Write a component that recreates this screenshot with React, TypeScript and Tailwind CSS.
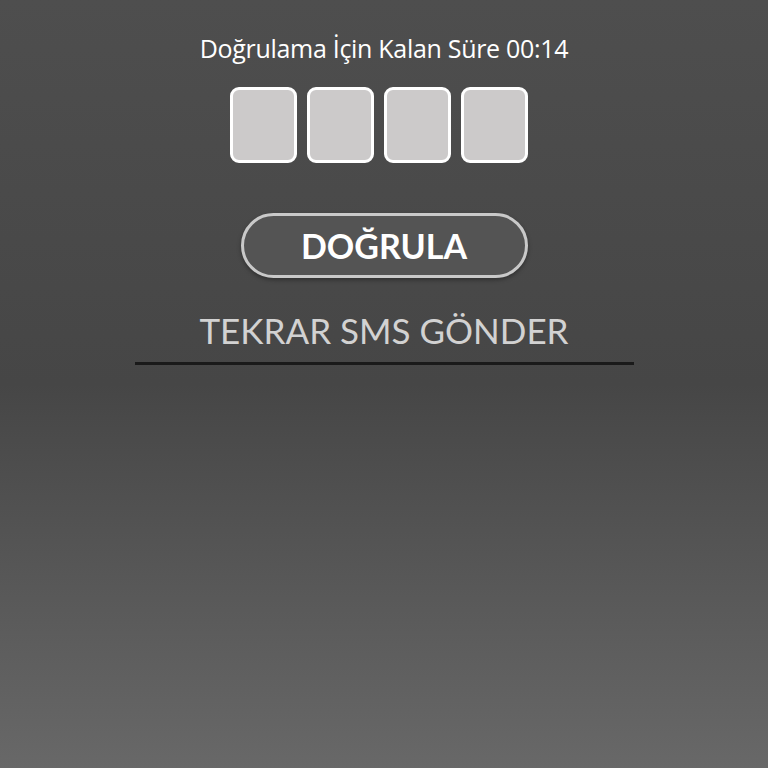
export default function App() {
  const digits = ['', '', '', ''];

  return (
    <div className="h-[768px] w-[768px] overflow-hidden bg-[linear-gradient(to_bottom,#4e4e4e_0%,#464646_50%,#686868_100%)]">
      <div className="flex flex-col items-center">
        {/* countdown */}
        <p className="mt-[30px] text-[25px] leading-[36px] tracking-[-0.3px] text-white font-['Open_Sans',sans-serif]">
          Doğrulama İçin Kalan Süre 00:14
        </p>

        {/* code inputs */}
        <div className="mt-[21px] mr-[10px] flex gap-[10px]">
          {digits.map((d, i) => (
            <div
              key={i}
              className="h-[76px] w-[67px] rounded-[9px] border-[3px] border-white bg-[#cccaca]"
            >
              {d}
            </div>
          ))}
        </div>

        {/* verify button */}
        <button className="mt-[50px] flex h-[65px] w-[287px] items-center justify-center rounded-full border-[3px] border-[#c9c9c9] bg-[#545454] shadow-[0_2px_4px_rgba(0,0,0,0.35)]">
          <span className="text-[34px] font-bold text-white font-['Lato',sans-serif]">
            DOĞRULA
          </span>
        </button>

        {/* resend */}
        <div className="mt-[33px] flex w-[499px] flex-col items-center border-b-[3px] border-[#1a1a1a] pb-[13px]">
          <span className="text-[35px] leading-[38px] text-[#d2d2d2] font-['Lato',sans-serif]">
            TEKRAR SMS GÖNDER
          </span>
        </div>
      </div>
    </div>
  );
}
